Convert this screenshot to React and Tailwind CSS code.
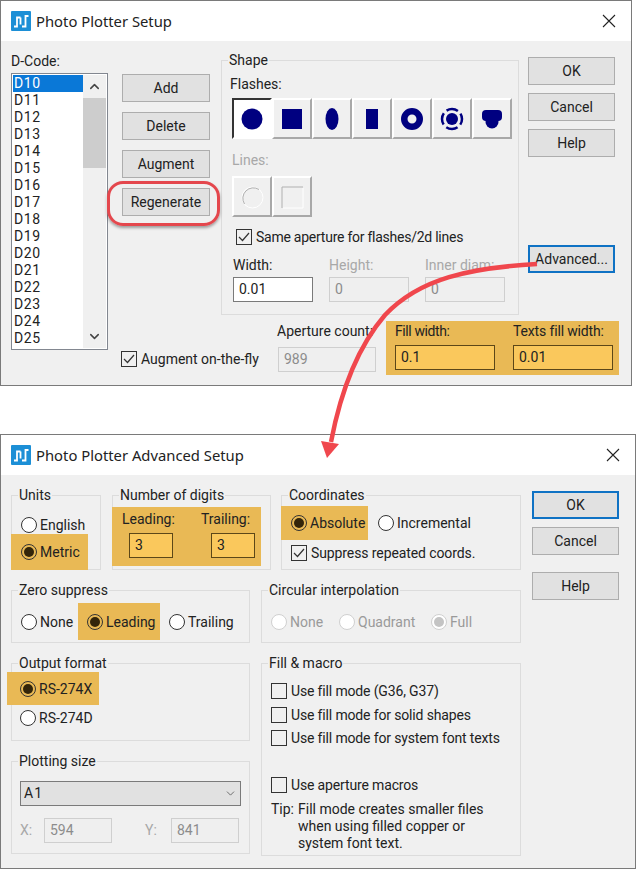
import React from "react";
import { ChevronUp, ChevronDown } from "lucide-react";

const codes = ["D10","D11","D12","D13","D14","D15","D16","D17","D18","D19","D20","D21","D22","D23","D24","D25"];

const AppIcon = () => (
  <svg width="20" height="20" viewBox="0 0 20 20" className="shrink-0">
    <rect width="20" height="20" rx="1" fill="#1c8fd6" />
    <path d="M3 15.5h3V6.5h3.5M9.5 13.5v-7M11 15.5h3.500V5h3" fill="none" stroke="#fff" strokeWidth="1.8" />
  </svg>
);

const CloseX = () => (
  <svg width="14" height="14" viewBox="0 0 14 14">
    <path d="M1 1l12 12M13 1L1 13" stroke="#222" strokeWidth="1.1" />
  </svg>
);

const Title = ({ children }) => (
  <div className="h-10 flex items-center bg-white pl-[10px] pr-[15px]">
    <AppIcon />
    <span className="ml-[5px] text-[14.8px] text-[#222] [font-family:'Noto_Sans',sans-serif]">{children}</span>
    <div className="ml-auto flex"><CloseX /></div>
  </div>
);

const Btn = ({ children, focus, className = "" }) => (
  <div className={`flex items-center justify-center h-[28px] bg-[#e1e1e1] text-[14px] text-[#222] ${focus ? "border-2 border-[#0f72c4]" : "border border-[#adadad]"} ${className}`}>
    {children}
  </div>
);

const Check = ({ checked }) => (
  <span className="w-[16px] h-[16px] shrink-0 border border-[#333] flex items-center justify-center">
    {checked && (
      <svg width="12" height="10" viewBox="0 0 12 10">
        <path d="M1 5l3.5 3.5L11 1" fill="none" stroke="#333" strokeWidth="1.2" />
      </svg>
    )}
  </span>
);

const Radio = ({ on, off, dark }) => (
  <span className={`w-[16px] h-[16px] shrink-0 rounded-full border flex items-center justify-center ${off ? "border-[#d0d0d0] bg-white" : "border-[#333]"} ${!off && !on ? "bg-white" : ""}`}>
    {on && <span className={`w-[10px] h-[10px] rounded-full ${off ? "bg-[#c4c4c4]" : dark ? "bg-[#33250a]" : "bg-[#222]"}`} />}
  </span>
);

const RadioRow = ({ label, on, off, dark, className = "" }) => (
  <div className={`flex items-center gap-[3px] text-[14px] leading-[20px] ${off ? "text-[#9a9a9a]" : "text-[#222]"} ${className}`}>
    <Radio on={on} off={off} dark={dark} />
    <span>{label}</span>
  </div>
);

const CheckRow = ({ label, checked, className = "" }) => (
  <div className={`flex items-center h-[16px] gap-[4px] text-[14px] text-[#222] whitespace-nowrap ${className}`}>
    <Check checked={checked} />
    <span>{label}</span>
  </div>
);

const Group = ({ title, className = "", children }) => (
  <fieldset className={`border border-[#dcdcdc] min-w-0 shrink-0 ${className}`}>
    <legend className="ml-[6px] px-[1px] text-[14px] leading-[20px] text-[#222]">{title}</legend>
    {children}
  </fieldset>
);

const Field = ({ value, w, disabled, hl, className = "" }) => (
  <div className={`h-[25px] flex items-center pl-[5px] text-[14px] ${w} ${
    hl ? "bg-[#fac85c] border border-[#5c4718] text-[#222]"
      : disabled ? "bg-[#efefef] border border-[#cfcfcf] text-[#8c8c8c]"
      : "bg-white border border-[#7a7a7a] text-[#222]"} ${className}`}>
    {value}
  </div>
);

const FlashBtn = ({ pressed, children }) => (
  <div className={`w-10 h-[41px] flex items-center justify-center border-2 ${pressed ? "bg-white border-t-[#333] border-l-[#333] border-r-white border-b-white" : "bg-[#f0f0f0] border-t-white border-l-white border-r-[#a8a8a8] border-b-[#a8a8a8]"}`}>
    <svg width="26" height="26" viewBox="0 0 26 26">{children}</svg>
  </div>
);

const navy = "#000080";

const FirstWindow = () => (
  <section className="w-[632px] h-[386px] border border-[#7a7a7a] flex flex-col bg-[#f0f0f0]">
    <Title>Photo Plotter Setup</Title>
    <div className="flex pl-[10px] pt-[10px]">
      <div className="w-[97px] shrink-0">
        <div className="text-[14px] leading-[20px] text-[#222]">D-Code:</div>
        <div className="h-[277px] mt-[2px] border border-[#828790] bg-white flex p-[1px]">
          <div className="w-[70px] text-[14px] leading-[17px] text-[#222] tracking-[0.6px]">
            {codes.map((c, i) => (
              <div key={c} className={`pl-[1px] ${i === 0 ? "bg-[#0a78d7] text-white" : ""}`}>{c}</div>
            ))}
          </div>
          <div className="flex-1 bg-[#f0f0f0] flex flex-col items-center">
            <div className="h-[23px] flex items-center">
              <ChevronUp size={15} strokeWidth={2.4} color="#444" />
            </div>
            <div className="w-full h-[70px] bg-[#cdcdcd]" />
            <div className="mt-auto h-[24px] flex items-center">
              <ChevronDown size={15} strokeWidth={2.4} color="#444" />
            </div>
          </div>
        </div>
      </div>

      <div className="ml-[14px] w-[497px] shrink-0 flex flex-col">
        <div className="flex">
          <div className="w-[88px] shrink-0 mt-[23px] flex flex-col gap-[10px]">
            <Btn>Add</Btn>
            <Btn>Delete</Btn>
            <Btn>Augment</Btn>
            <div className="relative">
              <Btn>Regenerate</Btn>
              <div className="absolute -left-[15px] -right-[10px] -top-[7px] -bottom-[10px] rounded-[16px] border-[3px] border-[#e4474d] shadow-[0_2px_3px_rgba(0,0,0,0.35)]" />
            </div>
          </div>

          <Group title="Shape" className="ml-[11px] w-[298px] h-[265px] -mt-[1px]">
            <div className="ml-[10px]">
              <div className="-ml-[2px] text-[14px] leading-[20px] text-[#222] mt-[4px]">Flashes:</div>
              <div className="flex mt-[4px]">
                <FlashBtn pressed><circle cx="13" cy="13" r="10.5" fill={navy} /></FlashBtn>
                <FlashBtn><rect x="3" y="3" width="20" height="20" fill={navy} /></FlashBtn>
                <FlashBtn><ellipse cx="13" cy="13" rx="6.500" ry="11" fill={navy} /></FlashBtn>
                <FlashBtn><rect x="7" y="3" width="12" height="20" fill={navy} /></FlashBtn>
                <FlashBtn><circle cx="13" cy="13" r="7.750" fill="none" stroke={navy} strokeWidth="6.500" /></FlashBtn>
                <FlashBtn>
                  <circle cx="13" cy="13" r="6" fill={navy} />
                  <circle cx="13" cy="13" r="10" fill="none" stroke={navy} strokeWidth="2.500" strokeDasharray="12 3.7" strokeDashoffset="6" />
                </FlashBtn>
                <FlashBtn>
                  <rect x="3" y="4" width="20" height="11" rx="4" fill={navy} />
                  <circle cx="13" cy="16" r="6.500" fill={navy} />
                </FlashBtn>
              </div>
              <div className="text-[14px] leading-[20px] text-[#a8a8a8] mt-[11px]">Lines:</div>
              <div className="flex mt-[6px]">
                <FlashBtn>
                  <circle cx="13.500" cy="13.500" r="10.500" fill="none" stroke="#fff" />
                  <path d="M5.500 20A10.500 10.500 0 0 1 20 5.500" fill="none" stroke="#b0b0b0" />
                </FlashBtn>
                <FlashBtn>
                  <path d="M24 4v20H4" fill="none" stroke="#fff" />
                  <path d="M3 24V3h21" fill="none" stroke="#b0b0b0" />
                </FlashBtn>
              </div>
              <CheckRow checked label="Same aperture for flashes/2d lines" className="ml-[4px] mt-[12px] tracking-[-0.25px]" />
              <div className="flex mt-[10px] ml-[1px] gap-[16px]">
                <div>
                  <div className="text-[14px] leading-[20px] text-[#222]">Width:</div>
                  <Field value="0.01" w="w-[80px]" className="mt-[2px]" />
                </div>
                <div>
                  <div className="text-[14px] leading-[20px] text-[#a8a8a8]">Height:</div>
                  <Field value="0" w="w-[80px]" disabled className="mt-[2px]" />
                </div>
                <div>
                  <div className="text-[14px] leading-[20px] text-[#a8a8a8]">Inner diam:</div>
                  <Field value="0" w="w-[80px]" disabled className="mt-[2px]" />
                </div>
              </div>
            </div>
          </Group>

          <div className="ml-[9px] w-[87px] shrink-0 flex flex-col mt-[6px]">
            <Btn>OK</Btn>
            <Btn className="mt-[8px]">Cancel</Btn>
            <Btn className="mt-[8px]">Help</Btn>
            <Btn focus className="mt-[88px]">Advanced...</Btn>
          </div>
        </div>

        <div className="flex items-start mt-[6px]">
          <CheckRow checked label="Augment on-the-fly" className="-ml-[1px] w-[156px] mt-[30px] shrink-0" />
          <div className="w-[100px] shrink-0">
            <div className="text-[14px] leading-[20px] text-[#222] whitespace-nowrap">Aperture count:</div>
            <Field value="989" w="w-[98px]" disabled className="mt-[6px] ml-[1px]" />
          </div>
          <div className="ml-[9px] w-[233px] h-[54px] bg-[#e9b955] flex pl-[9px] gap-[18px] shrink-0">
            <div>
              <div className="text-[14px] leading-[20px] text-[#222] tracking-[-0.4px]">Fill width:</div>
              <Field value="0.1" w="w-[100px]" hl className="mt-[4px]" />
            </div>
            <div>
              <div className="text-[14px] leading-[20px] text-[#222] whitespace-nowrap tracking-[-0.15px]">Texts fill width:</div>
              <Field value="0.01" w="w-[100px]" hl className="mt-[4px]" />
            </div>
          </div>
        </div>
      </div>
    </div>
  </section>
);

const SecondWindow = () => (
  <section className="w-[636px] h-[435px] mt-[48px] border border-[#7a7a7a] flex flex-col bg-[#f0f0f0]">
    <Title>Photo Plotter Advanced Setup</Title>
    <div className="flex pt-[10px] pl-[10px]">
      <div className="w-[511px] flex flex-col shrink-0">
        <div className="flex">
          <Group title="Units" className="w-[90px] h-[85px]">
            <RadioRow label="English" className="ml-[9px] mt-[8px] h-[24px]" />
            <RadioRow on dark label="Metric" className="-ml-[1px] -mt-[3px] pl-[10px] w-[77px] h-[36px] bg-[#e9b955]" />
          </Group>
          <Group title="Number of digits" className="ml-[11px] w-[159px] h-[85px]">
            <div className="bg-[#e9b955] w-[149px] h-[59px] mt-[2px] -ml-[1px] flex">
              <div className="w-[89px] pl-[10px] flex flex-col">
                <div className="text-[14px] leading-[22px] text-[#222] mt-[1px]">Leading:</div>
                <Field value="3" w="w-[44px]" hl className="mt-[3px] ml-[7px]" />
              </div>
              <div className="flex flex-col">
                <div className="text-[14px] leading-[22px] text-[#222] mt-[1px]">Trailing:</div>
                <Field value="3" w="w-[44px]" hl className="mt-[3px] ml-[10px]" />
              </div>
            </div>
          </Group>
          <Group title="Coordinates" className="ml-[10px] w-[240px] h-[85px]">
            <div className="flex items-center h-[34px] mt-[1px]">
              <RadioRow on dark label="Absolute" className="-ml-[1px] pl-[10px] w-[87px] h-[34px] bg-[#e9b955]" />
              <RadioRow label="Incremental" className="ml-[10px]" />
            </div>
            <CheckRow checked label="Suppress repeated coords." className="ml-[9px] mt-[5px] tracking-[-0.1px]" />
          </Group>
        </div>

        <div className="flex mt-[10px]">
          <Group title="Zero suppress" className="w-[239px] h-[63px]">
            <div className="flex items-center h-[37px] mt-[3px]">
              <RadioRow label="None" className="ml-[9px] w-[57px]" />
              <RadioRow on dark label="Leading" className="pl-[9px] w-[82px] h-[37px] bg-[#e9b955]" />
              <RadioRow label="Trailing" className="ml-[9px]" />
            </div>
          </Group>
          <Group title="Circular interpolation" className="ml-[11px] w-[260px] h-[63px]">
            <div className="flex items-center h-[37px] mt-[3px]">
              <RadioRow off label="None" className="ml-[9px] w-[68px]" />
              <RadioRow off label="Quadrant" className="w-[92px]" />
              <RadioRow off on label="Full" />
            </div>
          </Group>
        </div>

        <div className="flex mt-[10px]">
          <div className="w-[239px] flex flex-col shrink-0">
            <Group title="Output format" className="h-[88px]">
              <RadioRow on dark label="RS-274X" className="-ml-[5px] pl-[13px] w-[92px] h-[33px] -mt-[1px] bg-[#e9b955]" />
              <RadioRow label="RS-274D" className="ml-[8px] mt-[3px]" />
            </Group>
            <Group title="Plotting size" className="h-[103px] mt-[10px]">
              <div className="mx-[8px] mt-[10px] h-[25px] bg-[#e1e1e1] border border-[#7a7a7a] flex items-center justify-between px-[3px] text-[14px] tracking-[1px] text-[#222]">
                <span>A1</span>
                <ChevronDown size={13} strokeWidth={1.5} color="#555" />
              </div>
              <div className="flex items-center mt-[12px] ml-[8px] text-[14px] text-[#a8a8a8]">
                <span className="w-[24px]">X:</span>
                <Field value="594" w="w-[68px]" disabled />
                <span className="ml-[33px] w-[26px]">Y:</span>
                <Field value="841" w="w-[68px]" disabled />
              </div>
            </Group>
          </div>
          <Group title="Fill & macro" className="ml-[11px] w-[260px] h-[203px]">
            <div className="ml-[9px] mt-[10px] flex flex-col gap-[8px] tracking-[-0.15px]">
              <CheckRow label="Use fill mode (G36, G37)" />
              <CheckRow label="Use fill mode for solid shapes" />
              <CheckRow label="Use fill mode for system font texts" className="-mt-[1px]" />
              <CheckRow label="Use aperture macros" className="mt-[23px]" />
            </div>
            <div className="ml-[9px] mt-[8px] flex text-[14px] leading-[17px] text-[#222]">
              <span className="w-[27px] shrink-0">Tip:</span>
              <span>Fill mode creates smaller files<br />when using filled copper or<br />system font text.</span>
            </div>
          </Group>
        </div>
      </div>

      <div className="ml-[10px] w-[87px] flex flex-col mt-[6px]">
        <Btn focus>OK</Btn>
        <Btn className="mt-[8px]">Cancel</Btn>
        <Btn className="mt-[17px]">Help</Btn>
      </div>
    </div>
  </section>
);

export default function App() {
  return (
    <div className="relative w-[636px] h-[869px] bg-white overflow-hidden [font-family:Roboto,sans-serif]">
      <FirstWindow />
      <SecondWindow />
      <svg className="absolute left-0 top-0 pointer-events-none" width="636" height="869" viewBox="0 0 636 869">
        <path d="M537 264C470 268 420 278 385 315C355 350 340 395 331 442" fill="none" stroke="#f0474d" strokeWidth="4.500" />
        <path d="M321 441L339 444L327 458Z" fill="#f0474d" />
      </svg>
    </div>
  );
}
